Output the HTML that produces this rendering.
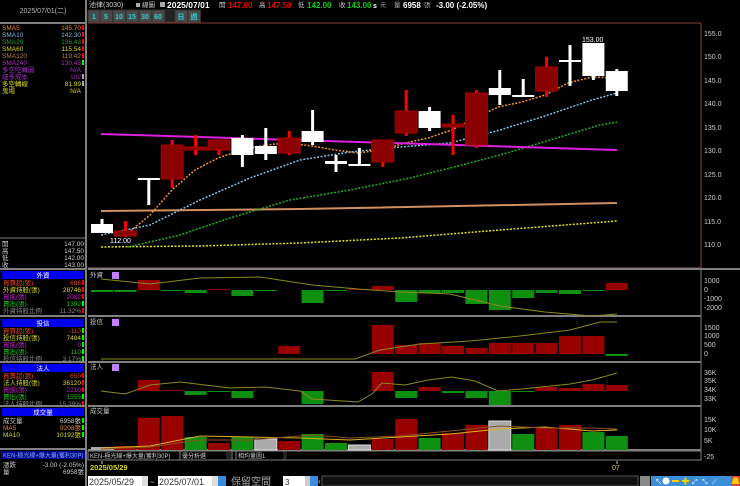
<!DOCTYPE html>
<html><head><meta charset="utf-8">
<style>
html,body{margin:0;padding:0;background:#000;width:740px;height:486px;overflow:hidden}
svg{display:block}
text{font-family:"Liberation Sans","Noto Sans CJK TC",sans-serif}
</style></head><body>
<svg id="s" width="740" height="486" viewBox="0 0 740 486" xmlns="http://www.w3.org/2000/svg">
<rect width="740" height="486" fill="#000"/>
</svg>
<script>
const S=document.getElementById('s'),NS='http://www.w3.org/2000/svg';
function el(t,a,txt){const e=document.createElementNS(NS,t);for(const k in a)e.setAttribute(k,a[k]);if(txt!==undefined)e.textContent=txt;S.appendChild(e);return e;}
function R(x,y,w,h,f,st){return el('rect',{x,y,width:w,height:h,fill:f,stroke:st||'none'});}
function L(x1,y1,x2,y2,c,w,d){const a={x1,y1,x2,y2,stroke:c,'stroke-width':w||1};if(d)a['stroke-dasharray']=d;return el('line',a);}
function T(x,y,s,c,sz,anc,wt){return el('text',{x,y,fill:c,'font-size':sz||7,'text-anchor':anc||'start','font-weight':wt||'normal'},s);}
function P(pts,c,w,d){const a={points:pts.map(p=>p.join(',')).join(' '),fill:'none',stroke:c,'stroke-width':w||1};if(d)a['stroke-dasharray']=d;return el('polyline',a);}
const cx=i=>102+23.4*i;

// ---- left panel
L(86,0,86,486,'#808080',2);
T(43,13,'2025/07/01(二)','#bbb',7,'middle');
L(0,23,86,23,'#808080',2);
const rows=[['SMA5','145.70','#e88a2a','#f00'],['SMA10','142.30','#7fb7e0','#f00'],['SMA20','136.43','#2a9a2a','#f00'],['SMA60','115.54','#d8d820','#f00'],['SMA120','119.42','#b08040','#f00'],['SMA240','130.43','#b030c0','#0f0'],['多空吃轉圖','N/A','#a030c0',''],['細多成本','102','#a030c0','#aaa'],['多空轉線','81.99','#d8d820','#aaa'],['鬼場','N/A','#d8d820','']];
rows.forEach((r,i)=>{const y=30+i*7;T(2,y,r[0],r[2],6.5);T(81,y,r[1],r[2],6.5,'end');if(r[3])R(82,y-5,2,5,r[3]);});
L(0,238,86,238,'#808080',1);
[['開','147.00'],['高','147.50'],['低','142.00'],['收','143.00']].forEach((r,i)=>{const y=246+i*7;T(2,y,r[0],'#ccc',6.5);T(84,y,r[1],'#ccc',6.5,'end');});
L(0,269,86,269,'#808080',2);
function sec(y,title,items){R(2,y,82,8,'#0000ee');T(43,y+6.5,title,'#fff',6.5,'middle');items.forEach((r,i)=>{const yy=y+14+i*7;T(3,yy,r[0],r[2],6.5);T(81,yy,r[1],r[2],6.5,'end');if(r[3])R(82,yy-5,2,5,r[3]);});}
sec(271,'外資',[['買賣超(張)','686','#e04020','#f00'],['外資持股(張)','28746','#d8d820','#f00'],['買進(張)','2082','#c020c0','#f00'],['賣出(張)','1392','#20c020','#0f0'],['外資持股比例','11.32%','#888','#f00']]);
L(0,316,86,316,'#808080',2);
sec(319,'投信',[['買賣超(張)','-110','#e04020','#0f0'],['投信持股(張)','7484','#d8d820','#0f0'],['買進(張)','0','#c020c0','#0f0'],['賣出(張)','110','#20c020','#0f0'],['投信持股比例','3.17%','#888','#0f0']]);
L(0,362,86,362,'#808080',2);
sec(364,'法人',[['買賣超(張)','650','#e04020','#f00'],['法人持股(張)','36120','#d8d820','#f00'],['買進(張)','2210','#c020c0','#f00'],['賣出(張)','1555','#20c020','#0f0'],['法人持股比例','15.29%','#888','#f00']]);
L(0,406,86,406,'#808080',2);
R(2,408,82,8,'#0000ee');T(43,414.5,'成交量','#fff',6.5,'middle');
T(3,423,'成交量','#ccc',6.5);T(81,423,'6958張','#ccc',6.5,'end');R(82,418,2,5,'#0f0');
T(3,430,'MA5','#e08030',6.5);T(81,430,'9208張','#e08030',6.5,'end');R(82,425,2,5,'#0f0');
T(3,437,'MA10','#d8d820',6.5);T(81,437,'10192張','#d8d820',6.5,'end');R(82,432,2,5,'#0f0');
L(0,449,86,449,'#808080',2);
R(1,451,84,8,'#00008b');T(3,457.5,'KEN-極光線+爆大量(獲利30P)','#7fb0ff',6);
T(3,467,'漲跌','#ccc',6.5);T(84,467,'-3.00 (-2.05%)','#ccc',6.5,'end');
T(3,474,'量','#ccc',6.5);T(84,474,'6958張','#ccc',6.5,'end');

// ---- top bar
T(89,7,'池律(3030)','#ccc',7);
R(136,3,4,4,'#aaa');T(142,7,'線圖','#ccc',6.5);
R(160,2,5,5,'#aaa');
T(167,8,'2025/07/01','#fff',8.5,'start','bold');
T(219,7,'開','#ccc',6.5);T(228,8,'147.00','#e00',8,'start','bold');
T(259,7,'高','#ccc',6.5);T(267,8,'147.50','#e00',8,'start','bold');
T(298,7,'低','#ccc',6.5);T(307,8,'142.00','#1c1',8,'start','bold');
T(339,7,'收','#ccc',6.5);T(347,8,'143.00','#1c1',8,'start','bold');
T(373,8,'s','#fff',7,'start','bold');T(380,7,'元','#aaa',6);
T(394,7,'量','#aaa',6.5);T(403,8,'6958','#fff',8,'start','bold');T(424,7,'張','#aaa',6.5);
T(436,8,'-3.00 (-2.05%)','#fff',8,'start','bold');
const bx=[[88,'1'],[100,'5'],[113,'10'],[126,'15'],[139,'30'],[152,'60'],[165,''],[175,'日'],[188,'週']];
bx.forEach((b,i)=>{R(b[0],10,i==6?10:12.5,12,i==6?'#222':'#4a4a4a','#333');if(b[1])T(b[0]+6,19,b[1],'#30d0d0',7,'middle','bold');});
L(88,23,701,23,'#8b4040',1);
L(701,23,701,268,'#8b4040',1);

// price axis
[[155,34],[150,57],[145,81],[140,104],[135,128],[130,151],[125,175],[120,198],[115,222],[110,245]].forEach(a=>T(704,a[1]+2,a[0]+'.0','#ccc',7));

// MA lines
P([[101,211],[300,209],[617,203]],'#d09060',2);
P([[101,247],[200,246],[300,243],[400,238],[500,230],[617,221]],'#e0e020',1.5,'2,1.5');
P([[128,247],[180,235],[230,218],[290,200],[350,190],[410,178],[450,168],[500,155],[550,140],[600,125],[617,122]],'#20b020',1.5,'2,1.5');
P([[101,235],[150,225],[200,200],[250,178],[300,160],[350,152],[400,147],[450,143],[500,130],[545,116],[592,100],[617,93]],'#80c0e0',1.5,'2,1.5');
P([[128,233],[150,215],[172,190],[195,170],[218,158],[242,150],[265,145],[288,143],[312,146],[335,150],[358,153],[382,150],[405,143],[428,138],[452,130],[475,118],[498,107],[522,102],[545,95],[568,83],[592,77],[615,78]],'#f09030',1.5,'2,1.5');
L(101,134,617,150,'#e020e0',2);

// candles [type,bt,bb,wt,wb]
const C=[['w',224,233,219,233],['r',231,236,221,237],['w',178,179,178,205],['r',145,179,140,188],['r',147,150,135,155],['r',140,150,140,155],['w',138,155,135,167],['w',146,154,128,160],['r',138,153,131,155],['w',131,142,110,145],['w',161,164,155,172],['w',164,166,148,166],['r',140,162,140,167],['r',111,133,90,136],['w',111,128,107,131],['r',124,127,115,155],['r',93,145,90,148],['w',88,95,70,105],['w',95,96,79,97],['r',67,91,57,97],['w',60,61,45,86],['w',43,76,43,80],['w',71,91,69,96]];
C.forEach((c,i)=>{const x=cx(i);const col=c[0]=='w'?'#fff':'#f00',body=c[0]=='w'?'#fff':'#8b0000';
 R(x-1.5,c[3],3,c[4]-c[3],col);R(x-11,c[1],22,Math.max(2,c[2]-c[1]),body,c[0]=='r'?'#a00':'none');});
T(110,243,'112.00','#fff',7,'start');T(582,42,'153.00','#fff',7,'start');

// sub panels
function frame(y1,y2){L(88,y2,701,y2,'#808080',2);L(701,y1,701,y2,'#808080',1);}
L(88,268,701,268,'#8b6060',1);
L(88,269,740,269,'#808080',2);
frame(269,316);frame(316,362);frame(362,406);frame(406,450);
// 外資
T(90,277,'外資','#ccc',6.5);R(112,272,7,7,'#c080ff');
const fz=290;
const fb=[[0,-2],[1,-2],[2,10],[3,-1],[4,-3],[5,1],[6,-6],[7,-1],[8,0],[9,-13],[10,-1],[11,1],[12,4],[13,-12],[14,-3],[15,-3],[16,-14],[17,-20],[18,-8],[19,-3],[20,-4],[21,-1],[22,7]];
fb.forEach(b=>{const x=cx(b[0]);if(b[1]>0)R(x-11,fz-b[1],22,b[1],'#990000');else if(b[1]<0)R(x-11,fz,22,-b[1],'#109010');});
P([[101,279],[150,284],[200,278],[260,277],[312,285],[358,289],[400,292],[450,294],[500,306],[545,312],[592,316],[617,314]],'#8a8a20',1);
[['1000',281],['0',290],['-1000',299],['-2000',308]].forEach(a=>T(704,a[1]+2,a[0],'#ccc',7));
// 投信
T(90,324,'投信','#ccc',6.5);R(112,319,7,7,'#c080ff');
const tz=354;
[[8,8],[12,29],[13,9],[14,11],[15,8],[16,6],[17,11],[18,11],[19,11],[20,18],[21,18],[22,-2]].forEach(b=>{const x=cx(b[0]);if(b[1]>0)R(x-11,tz-b[1],22,b[1],'#990000');else R(x-11,tz,22,-b[1],'#109010');});
P([[101,359],[355,359],[380,350],[420,344],[470,341],[520,336],[570,330],[600,322],[617,322]],'#8a8a20',1);
[['1500',328],['1000',336],['500',345],['0',354]].forEach(a=>T(704,a[1]+2,a[0],'#ccc',7));
// 法人
T(90,369,'法人','#ccc',6.5);R(112,364,7,7,'#c080ff');
const nz=391;
[[2,11],[3,1],[4,-4],[5,-1],[6,-7],[9,-13],[12,19],[13,-7],[14,4],[15,-2],[16,-7],[17,-14],[18,-1],[19,4],[20,3],[21,7],[22,6]].forEach(b=>{const x=cx(b[0]);if(b[1]>0)R(x-11,nz-b[1],22,b[1],'#990000');else R(x-11,nz,22,-b[1],'#109010');});
P([[101,391],[125,394],[150,385],[180,382],[230,388],[265,387],[300,391],[312,399],[358,402],[372,394],[382,383],[405,385],[428,380],[452,377],[475,381],[498,391],[522,389],[570,384],[592,380],[617,373]],'#8a8a20',1);
[['36K',373],['35K',381],['34K',390],['33K',399]].forEach(a=>T(704,a[1]+2,a[0],'#ccc',7));
// 成交量
T(90,413,'成交量','#ccc',6.5);
const vb=450;
const V=[['g',447],['r',446],['r',418],['r',416],['gr',437],['r',443],['gr',437],['gy',439],['r',441],['gr',434],['gr',443],['gy',445],['r',439],['r',419],['gr',438],['r',433],['r',425],['gy',421],['gr',434],['r',428],['r',425],['gr',432],['gr',436]];
V.forEach((v,i)=>{const x=cx(i);const f=v[0]=='r'?'#990000':v[0]=='gr'?'#109010':'#aaa';R(x-11,v[1],22,vb-v[1],f,v[0]=='gy'?'#ddd':'none');});
P([[101,448],[150,446],[200,436],[250,437],[300,438],[350,440],[400,437],[450,434],[500,429],[545,427],[592,431],[617,430]],'#e0b020',1);
P([[101,449],[150,447],[200,440],[250,440],[312,435],[350,438],[400,436],[450,431],[500,426],[545,428],[592,428],[617,429]],'#8a5020',1);
[['15K',420],['10K',430],['5K',441]].forEach(a=>T(704,a[1]+2,a[0],'#ccc',7));
T(704,459,'-25','#ccc',7);
// dropdown row
R(88,451,613,9,'#000','#808080');
T(90,458,'KEN-極光線+爆大量(獲利30P)','#ccc',6);
R(180,451,52,9,'#000','#808080');T(182,458,'優分析選','#ccc',6);R(226,452,5,7,'#222');
R(236,451,48,9,'#000','#808080');T(238,458,'相均量圖1','#ccc',6);R(283,452,4,7,'#222');
// dates
L(102,461,102,464,'#d8d820',1);T(90,470,'2025/05/29','#d8d820',7.5,'start','bold');
L(617,461,617,464,'#d8d820',1);T(612,470,'07','#d8d820',7);
// bottom controls
R(88,476,55,10,'#fff');T(89,485,'2025/05/29','#333',9);R(142,476,6,10,'#ddd');
T(150,485,'~','#ccc',8);
R(158,476,55,10,'#fff');T(159,485,'2025/07/01','#333',9);R(212,476,6,10,'#ddd');
R(218,476,8,10,'#3a8adf');
T(231,485,'保留空間','#aaa',10);
R(283,476,22,10,'#fff');T(285,485,'3','#333',8);R(305,476,5,10,'#ccc');
R(310,476,8,10,'#3a8adf');T(318,484,'‹','#ccc',8);
R(322,476,316,10,'#111','#555');
R(640,476,10,10,'#888');
for(let i=0;i<9;i++){R(651+i*10,476,10,10,'#3b8ed8');}
R(731,476,9,10,'#e04040');
T(655,484,'↖','#fff',7);el('circle',{cx:666,cy:481,r:3.5,fill:'#fff'});
L(672,481,679,481,'#ffd000',2);L(682,481,689,481,'#ffd000',2);L(685.5,477.5,685.5,484.5,'#ffd000',2);
T(692,484,'⤢','#fff',7);T(702,484,'⤡','#fff',7);T(712,484,'⟋','#fff',7);
el('path',{d:'M735.5 477 q-3 0 -3 4 l-1 3 h8 l-1 -3 q0 -4 -3 -4z',fill:'#ffd000'});
</script>
</body></html>
